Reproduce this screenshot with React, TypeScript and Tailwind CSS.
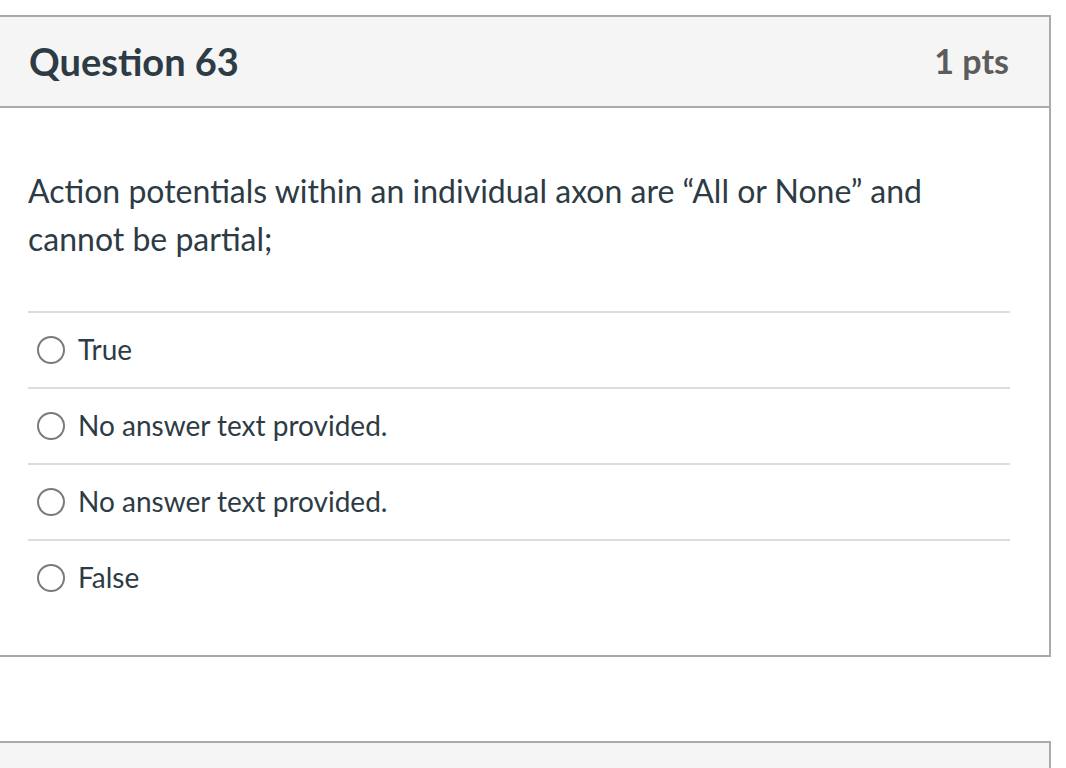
const font = { fontFamily: 'Lato, "Noto Sans", sans-serif' };

const ANSWERS = ['True', 'No answer text provided.', 'No answer text provided.', 'False'];

function Radio() {
  return (
    <span className="ml-[9px] inline-block h-[28px] w-[28px] shrink-0 rounded-full border-2 border-[#7b7b7b] bg-white" />
  );
}

export default function App() {
  return (
    <div className="min-h-[768px] overflow-hidden bg-white pt-[15px] text-[#2d3b45]" style={font}>
      <div className="-ml-[12px] w-[1063px] border-2 border-[#aaaaaa]">
        <div className="flex h-[91px] items-center justify-between border-b-2 border-[#aaaaaa] bg-[#f5f5f5] pl-[39px] pr-[40px]">
          <h2 className="-mt-[2px] text-[38px] font-bold leading-none">Question 63</h2>
          <span className="-mt-[2px] text-[34px] font-bold leading-none text-[#5c5c5c]">1 pts</span>
        </div>
        <div className="pb-[40px] pl-[38px] pr-[39px] pt-[60px]">
          <p className="-mt-[1px] text-[32px] leading-[48px]">
            Action potentials within an individual axon are “All or None” and
            <br />
            cannot be partial;
          </p>
          <div className="mt-[48px]">
            {ANSWERS.map((a, i) => (
              <div key={i} className="flex h-[76px] items-center gap-[13px] border-t-2 border-[#dddddd]">
                <Radio />
                <span className="-mt-[3px] text-[28px]">{a}</span>
              </div>
            ))}
          </div>
        </div>
      </div>
      <div className="-ml-[12px] mt-[84px] h-[60px] w-[1063px] border-2 border-[#aaaaaa] bg-[#f5f5f5]" />
    </div>
  );
}
